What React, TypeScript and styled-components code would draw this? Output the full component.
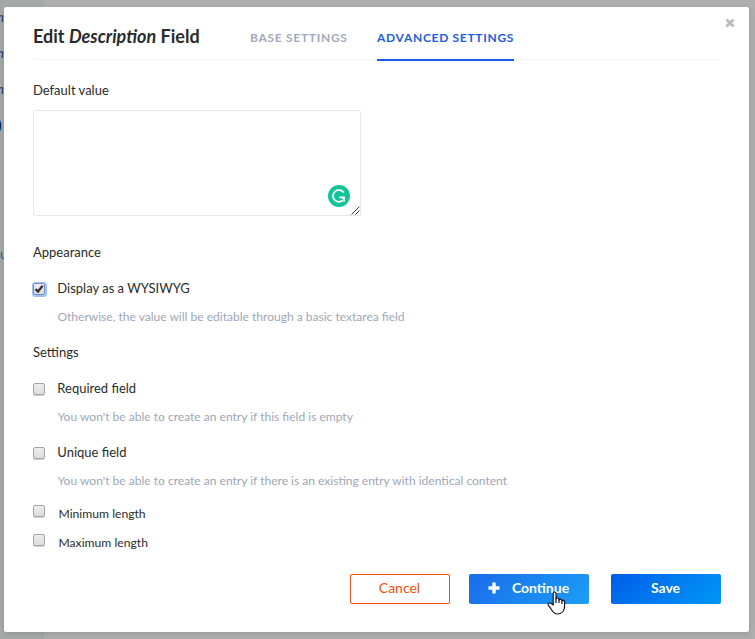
import React, { useState } from "react";
import styled, { createGlobalStyle } from "styled-components";

const GlobalStyle = createGlobalStyle`
  *, *::before, *::after { box-sizing: border-box; }
  body { margin: 0; overflow: hidden; font-family: Lato, sans-serif; color: #292b2c; }
  button, textarea { font-family: inherit; }
`;

const Page = styled.div`
  position: relative;
  display: flex;
  width: 755px;
  height: 639px;
  background: #aeaeae;
`;

const Sidebar = styled.aside`
  width: 44px;
  padding-top: 8px;
  background: #a7a9a8;
  overflow: hidden;
`;

const SidebarItem = styled.div<{ $active?: boolean; $link?: boolean }>`
  height: 36px;
  margin-top: ${(p) => (p.$link ? "93px" : "0")};
  line-height: 18px;
  font-size: 13px;
  font-style: ${(p) => (p.$active || p.$link ? "normal" : "italic")};
  font-weight: ${(p) => (p.$active ? 700 : 400)};
  color: ${(p) => (p.$active ? "#081a5c" : p.$link ? "#1c5d9c" : "#1c3a78")};
  text-indent: ${(p) => (p.$active ? "-2px" : p.$link ? "0" : "-3px")};
`;

const Modal = styled.section`
  position: absolute;
  left: 4px;
  top: 7px;
  width: 745px;
  height: 625px;
  padding: 0 28px 0 29px;
  background: #fff;
  border-radius: 2px;
  box-shadow: 0 2px 6px rgba(0, 0, 0, 0.12);
`;

const CloseButton = styled.button`
  position: absolute;
  right: 14px;
  top: 11px;
  width: 10px;
  height: 10px;
  padding: 0;
  border: 0;
  background: none;
  svg { display: block; }
`;

const Header = styled.header`
  display: flex;
  height: 53px;
  border-bottom: 1px solid #f6f6f6;
`;

const Title = styled.h1`
  width: 217px;
  margin: 0;
  font-size: 18px;
  font-weight: 700;
  line-height: 24px;
  padding-top: 17px;
  white-space: nowrap;
`;

const Tabs = styled.nav`
  display: flex;
  gap: 30px;
`;

const Tab = styled.a<{ $active?: boolean; $width: number }>`
  width: ${(p) => p.$width}px;
  height: 54px;
  padding-top: 21px;
  font-size: 12px;
  font-weight: 700;
  line-height: 19px;
  letter-spacing: 0.7px;
  white-space: nowrap;
  color: ${(p) => (p.$active ? "#1c5de7" : "#a3a9ba")};
  border-bottom: 2px solid ${(p) => (p.$active ? "#1c5de7" : "transparent")};
`;

const Heading = styled.h2<{ $top: number }>`
  margin: ${(p) => p.$top}px 0 0;
  font-size: 13px;
  font-weight: 400;
  line-height: 20px;
`;

const EditorFrame = styled.div`
  position: relative;
  width: 328px;
  height: 106px;
  margin-top: 10px;
`;

const Editor = styled.textarea`
  display: block;
  width: 100%;
  height: 100%;
  padding: 8px;
  border: 1px solid #e3e9f3;
  border-radius: 2px;
  outline: 0;
  resize: none;
`;

const GrammarBadge = styled.svg`
  position: absolute;
  left: 295px;
  top: 75px;
`;

const Grip = styled.svg`
  position: absolute;
  right: 1px;
  bottom: 1px;
`;

const Option = styled.label<{ $top: number; $compact?: boolean }>`
  display: flex;
  align-items: flex-start;
  height: 20px;
  margin-top: ${(p) => p.$top}px;
  gap: ${(p) => (p.$compact ? 13.5 : 12.3)}px;
  font-size: ${(p) => (p.$compact ? 12.15 : 13)}px;
  line-height: 20px;
`;

const CheckInput = styled.input`
  position: absolute;
  opacity: 0;
`;

const Box = styled.span<{ $checked: boolean; $offset: number }>`
  display: block;
  width: 12px;
  height: 12px;
  margin-top: ${(p) => p.$offset}px;
  border: 1px solid ${(p) => (p.$checked ? "#718fc2" : "#a6a6a6")};
  border-radius: 2px;
  background: linear-gradient(#eeeeee, #dcdcdc);
  box-shadow: ${(p) => (p.$checked ? "0.5px 0.5px 0 1.5px #9dbffa" : "0 1px 0 #d2d2d2")};
  svg { display: block; }
`;

const Hint = styled.p`
  margin: 9px 0 -1px 24.4px;
  height: 20px;
  font-size: 12.04px;
  line-height: 20px;
  color: #9ea7b8;
`;

const Footer = styled.footer`
  display: flex;
  justify-content: flex-end;
  margin-top: 21px;
`;

const Button = styled.button<{ $kind: "cancel" | "continue" | "save" }>`
  display: flex;
  align-items: center;
  justify-content: center;
  width: ${(p) => ({ cancel: 100, continue: 120, save: 110 })[p.$kind]}px;
  height: 30px;
  margin-left: ${(p) => ({ cancel: 0, continue: 19, save: 22 })[p.$kind]}px;
  padding: 0 1px 3px 0;
  border: ${(p) => (p.$kind === "cancel" ? "1px solid #f64d0a" : "0")};
  border-radius: 2px;
  color: ${(p) => (p.$kind === "cancel" ? "#f64d0a" : "#fff")};
  background: ${(p) =>
    ({
      cancel: "#fff",
      continue: "linear-gradient(135deg, #1a6bea, #1b9ff7)",
      save: "linear-gradient(135deg, #005eea, #0097f6)",
    })[p.$kind]};
  font-size: 14px;
  font-weight: ${(p) => (p.$kind === "cancel" ? 400 : 700)};
  svg { margin-right: 12px; }
`;

const Pointer = styled.svg`
  position: absolute;
  left: 543px;
  top: 584px;
`;

function Check({ label, hint, top, offset, compact, initial = false }: {
  label: string;
  hint?: string;
  top: number;
  offset: number;
  compact?: boolean;
  initial?: boolean;
}) {
  const [on, setOn] = useState(initial);
  return (
    <>
      <Option $top={top} $compact={compact}>
        <CheckInput type="checkbox" checked={on} onChange={() => setOn(!on)} />
        <Box $checked={on} $offset={offset}>
          {on && (
            <svg width="10" height="10" viewBox="0 0 10 10">
              <path d="M1.5 5.2 4 7.5 8.6 1.8" fill="none" stroke="#333" strokeWidth="2.3" />
            </svg>
          )}
        </Box>
        {label}
      </Option>
      {hint && <Hint>{hint}</Hint>}
    </>
  );
}

export default function App() {
  return (
    <Page>
      <GlobalStyle />
      <Sidebar>
        <SidebarItem>n</SidebarItem>
        <SidebarItem>n</SidebarItem>
        <SidebarItem>n</SidebarItem>
        <SidebarItem $active>)</SidebarItem>
        <SidebarItem $link>u</SidebarItem>
      </Sidebar>
      <Modal>
        <CloseButton aria-label="Close">
          <svg width="10" height="10" viewBox="0 0 10 10">
            <path d="M1.5 1.5 8.5 8.5M8.5 1.5 1.5 8.5" stroke="#b8bac0" strokeWidth="2.8" />
          </svg>
        </CloseButton>
        <Header>
          <Title>Edit <em>Description</em> Field</Title>
          <Tabs>
            <Tab $width={97}>BASE SETTINGS</Tab>
            <Tab $width={137} $active>ADVANCED SETTINGS</Tab>
          </Tabs>
        </Header>
        <Heading $top={20}>Default value</Heading>
        <EditorFrame>
          <Editor aria-label="Default value" />
          <GrammarBadge width="22" height="22" viewBox="0 0 22 22">
            <circle cx="11" cy="11" r="11" fill="#15c39a" />
            <path d="M15.8 7.6A5.9 5.9 0 1 0 14.6 15.5" fill="none" stroke="#fff" strokeWidth="1.7" />
            <path d="M11.3 12.4H16V16.6" fill="none" stroke="#fff" strokeWidth="1.6" />
            <path d="M13 12H16.8V16.4Z" fill="#fff" />
          </GrammarBadge>
          <Grip width="9" height="9" viewBox="0 0 9 9">
            <path d="M.5 8.5 8.5 .5M4.5 8.5 8.5 4.5" stroke="#444" strokeWidth="1" />
          </Grip>
        </EditorFrame>
        <Heading $top={26}>Appearance</Heading>
        <Check
          label="Display as a WYSIWYG"
          hint="Otherwise, the value will be editable through a basic textarea field"
          top={16}
          offset={5}
          initial
        />
        <Heading $top={16}>Settings</Heading>
        <Check
          label="Required field"
          hint="You won't be able to create an entry if this field is empty"
          top={16}
          offset={5}
        />
        <Check
          label="Unique field"
          hint="You won't be able to create an entry if there is an existing entry with identical content"
          top={16}
          offset={5}
        />
        <Check label="Minimum length" top={14} offset={1} compact />
        <Check label="Maximum length" top={9} offset={1} compact />
        <Footer>
          <Button $kind="cancel">Cancel</Button>
          <Button $kind="continue">
            <svg width="12" height="12" viewBox="0 0 12 12">
              <path d="M6 .5V11.5M.5 6H11.5" stroke="#fff" strokeWidth="3.4" />
            </svg>
            Continue
          </Button>
          <Button $kind="save">Save</Button>
        </Footer>
        <Pointer width="19" height="24" viewBox="0 0 19 24">
          <path
            d="M6.2 14V2.5Q6.2 1 7.6 1T9 2.5V8Q9.3 6.7 10.6 7T12 9Q12.3 7.8 13.5 8.1T14.9 10Q15.3 9 16.4 9.3T17.6 11.2V15Q17.6 18 16 20.5 14 23 10.5 23 7.5 23 5.8 20.5L1.3 14.2Q.7 12.5 2 12 3.2 11.5 4.2 12.6Z"
            fill="#fff" stroke="#17172b" strokeWidth="1.2" strokeLinejoin="round"
          />
          <path d="M9 7.5V12M12 9V12M14.9 10V13" stroke="#17172b" strokeWidth="1.2" />
        </Pointer>
      </Modal>
    </Page>
  );
}
